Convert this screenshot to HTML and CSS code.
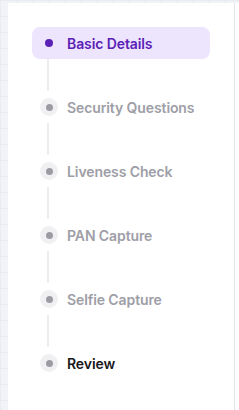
FILE: index.html
```html
<!DOCTYPE html>
<html lang="en">
<head>
    <meta charset="UTF-8">
    <meta name="viewport" content="width=device-width, initial-scale=1.0">
    <title>Onboarding Steps</title>
    <link rel="stylesheet" href="styles.css">
</head>
<body>
    <div class="layout">
        <aside class="sidebar">
            <ul class="steps">
                <li class="step active">
                    <span class="marker"><span class="dot"></span></span>
                    <span class="label">Basic Details</span>
                </li>
                <li class="connector"></li>
                <li class="step">
                    <span class="marker"><span class="dot"></span></span>
                    <span class="label">Security Questions</span>
                </li>
                <li class="connector"></li>
                <li class="step">
                    <span class="marker"><span class="dot"></span></span>
                    <span class="label">Liveness Check</span>
                </li>
                <li class="connector"></li>
                <li class="step">
                    <span class="marker"><span class="dot"></span></span>
                    <span class="label">PAN Capture</span>
                </li>
                <li class="connector"></li>
                <li class="step">
                    <span class="marker"><span class="dot"></span></span>
                    <span class="label">Selfie Capture</span>
                </li>
                <li class="connector"></li>
                <li class="step current">
                    <span class="marker"><span class="dot"></span></span>
                    <span class="label">Review</span>
                </li>
            </ul>
        </aside>
        <main class="content"></main>
    </div>
</body>
</html>
```

FILE: styles.css
```css
html, body {
    height: 100%;
}
body {
    margin: 0;
    font-family: Inter, "Noto Sans", sans-serif;
    background-color: #f1f3f7;
    background-image:
        linear-gradient(#e8ebf1 1px, transparent 1px),
        linear-gradient(90deg, #e8ebf1 1px, transparent 1px);
    background-size: 16px 16px;
}
.layout {
    display: flex;
    height: calc(100% - 3px);
    margin-top: 3px;
    padding-left: 8px;
}
.sidebar {
    width: 227px;
    flex-shrink: 0;
    background-color: #fff;
    border-right: 1px solid #e4e4e7;
    padding: 24px 24px 0 24px;
    box-sizing: border-box;
}
.content {
    flex: 1;
    background-color: #fff;
}
.steps {
    list-style: none;
    margin: 0;
    padding: 0;
}
.step {
    display: flex;
    align-items: center;
    height: 32px;
    padding-left: 8px;
    border-radius: 8px;
}
.marker {
    width: 18px;
    height: 18px;
    border-radius: 50%;
    background-color: #f0f0f2;
    display: flex;
    align-items: center;
    justify-content: center;
    flex-shrink: 0;
}
.dot {
    width: 7px;
    height: 7px;
    border-radius: 50%;
    background-color: #9b9ba3;
}
.label {
    margin-left: 9px;
    font-size: 14px;
    font-weight: 600;
    color: #9e9ea7;
    letter-spacing: -0.1px;
}
.connector {
    height: 32px;
    width: 2px;
    margin-left: 15px;
    background-color: #ededef;
}
.step.active {
    background-color: #ede4fe;
}
.step.active .marker {
    background-color: transparent;
}
.step.active .dot {
    width: 8px;
    height: 8px;
    background-color: #5b21b6;
}
.step.active .label {
    color: #5b21b6;
}
.step.current .label {
    color: #18181b;
}
```
